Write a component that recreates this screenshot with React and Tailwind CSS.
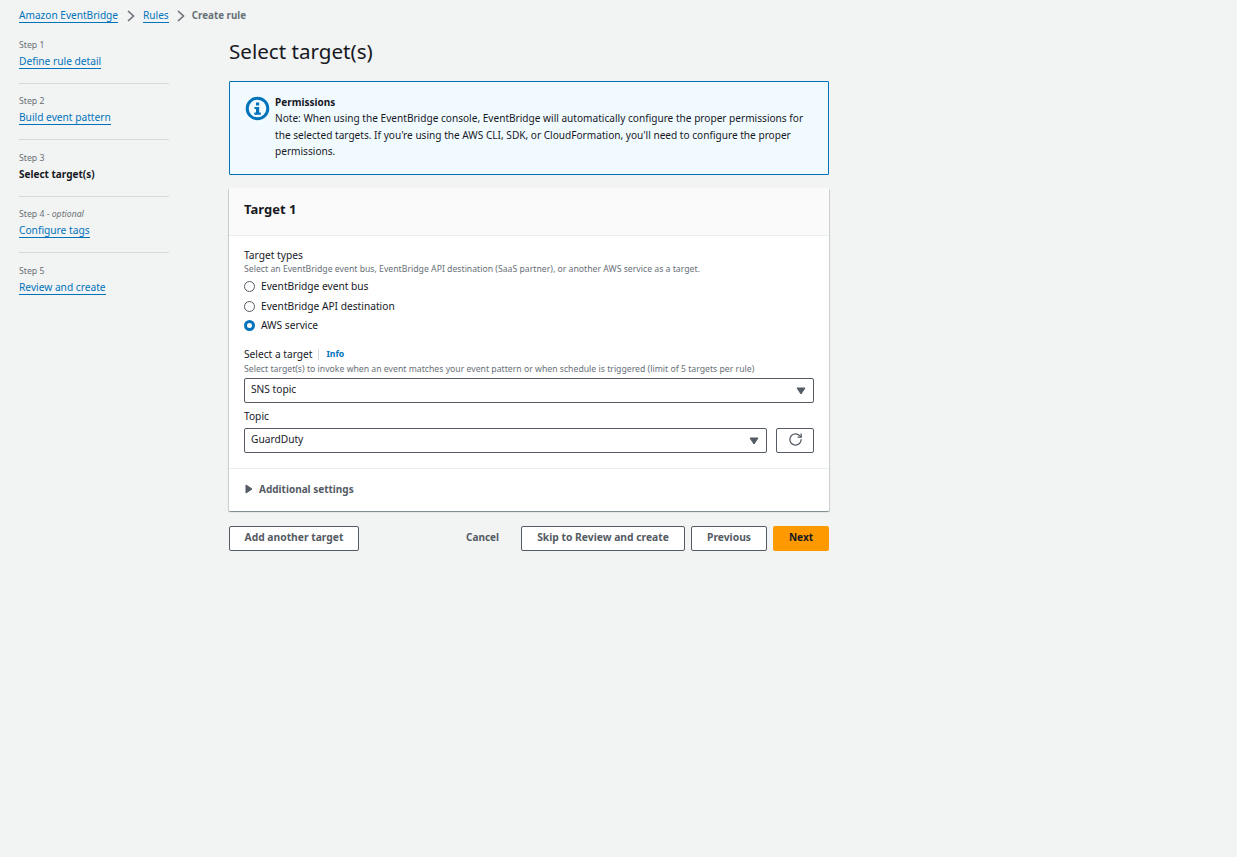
import React from 'react';
import { RotateCw } from 'lucide-react';

const steps = [
  { label: 'Step 1', name: 'Define rule detail' },
  { label: 'Step 2', name: 'Build event pattern' },
  { label: 'Step 3', name: 'Select target(s)', active: true },
  { label: 'Step 4', optional: true, name: 'Configure tags' },
  { label: 'Step 5', name: 'Review and create' },
];

const Caret = ({ className }) => (
  <svg width="10" height="8" viewBox="0 0 10 8" className={className}>
    <path d="M1 1h8L5 7z" fill="#545b64" stroke="#545b64" strokeLinejoin="round" />
  </svg>
);

const Chevron = ({ className }) => (
  <svg width="10" height="12" viewBox="0 0 10 12" className={className}>
    <path d="M2 1l5.5 5L2 11" fill="none" stroke="#687078" strokeWidth="1.6" />
  </svg>
);

const Radio = ({ checked, label }) => (
  <div className="flex items-center h-[19.5px]">
    {checked ? (
      <span className="w-[11px] h-[11px] rounded-full border-[3px] border-[#0073bb] bg-white" />
    ) : (
      <span className="w-[11px] h-[11px] rounded-full border border-[#545b64] bg-white" />
    )}
    <span className="ml-[6px] text-[10.2px] text-[#16191f]">{label}</span>
  </div>
);

const Select = ({ value, className }) => (
  <div className={`flex items-center justify-between h-[25px] pl-[6px] pr-[7px] bg-white border border-[#545b64] rounded-[2px] text-[10.2px] text-[#16191f] ${className}`}>
    <span className="pb-[2px]">{value}</span>
    <Caret />
  </div>
);

const Button = ({ children, className = '' }) => (
  <button className={`h-[25px] pb-[2px] bg-white border border-[#545b64] rounded-[2px] text-[10.3px] font-bold text-[#545b64] ${className}`}>
    {children}
  </button>
);

export default function App() {
  return (
    <div className="min-h-[857px] bg-[#f2f3f3] font-['Noto_Sans',sans-serif] pl-[19px] pt-[8px]">
      {/* Breadcrumbs */}
      <div className="flex items-center h-[15px] text-[10.1px] leading-[15px]">
        <a className="text-[#0073bb] border-b border-[#0073bb] leading-[14px]">Amazon EventBridge</a>
        <Chevron className="mx-[7.5px]" />
        <a className="text-[#0073bb] border-b border-[#0073bb] leading-[14px]">Rules</a>
        <Chevron className="ml-[7.5px] mr-[5.5px]" />
        <span className="font-bold text-[9.8px] text-[#687078]">Create rule</span>
      </div>

      <div className="flex">
        {/* Steps */}
        <nav className="w-[150px] mt-[15.7px] shrink-0">
          {steps.map((s, i) => (
            <div key={s.label} className={i < steps.length - 1 ? 'h-[45px] border-b border-[#d5dbdb] mb-[11.5px]' : ''}>
              <div className="text-[8.7px] leading-[13px] text-[#687078]">
                {s.label}
                {s.optional && <span> - <i>optional</i></span>}
              </div>
              <div className="mt-[2px] text-[10.2px] leading-[15px]">
                {s.active ? (
                  <span className="font-bold text-[10px] text-[#16191f]">{s.name}</span>
                ) : (
                  <a className="text-[#0073bb] border-b border-[#0073bb]">{s.name}</a>
                )}
              </div>
            </div>
          ))}
        </nav>

        {/* Main */}
        <main className="ml-[60px] w-[600px]">
          <h1 className="mt-[12px] text-[20.6px] leading-[32px] text-[#16191f]">Select target(s)</h1>

          <div className="mt-[14px] h-[94px] flex bg-[#f1faff] border border-[#0073bb] rounded-[1px] pl-[15px] pt-[12px]">
            <svg width="25" height="25" viewBox="0 0 25 25" className="shrink-0 mt-[2px]">
              <circle cx="12.5" cy="12.5" r="10.3" fill="none" stroke="#0073bb" strokeWidth="3" />
              <rect x="11" y="6.5" width="3.2" height="3" fill="#0073bb" />
              <path d="M9.5 11h4.7v5.5h1.6V18.8H9.3v-2.3H11V13H9.5z" fill="#0073bb" />
            </svg>
            <div className="ml-[5px] w-[540px] text-[10.1px] leading-[16.4px] text-[#16191f]">
              <div className="font-bold text-[10px]">Permissions</div>
              <div>
                Note: When using the EventBridge console, EventBridge will automatically configure the proper permissions for the selected targets. If you're using the AWS CLI, SDK, or CloudFormation, you'll need to configure the proper permissions.
              </div>
            </div>
          </div>

          {/* Target card */}
          <section className="mt-[13px] bg-white shadow-[0_1px_1px_0_rgba(0,28,36,0.3),1px_1px_1px_0_rgba(0,28,36,0.15),-1px_1px_1px_0_rgba(0,28,36,0.15)] rounded-[1px]">
            <div className="h-[48px] flex items-center px-[15px] pb-[4px] bg-[#fafafa] border-b border-[#eaeded]">
              <h2 className="text-[13px] font-bold text-[#16191f]">Target 1</h2>
            </div>

            <div className="px-[15px] pt-[12px] pb-[15px] border-b border-[#eaeded]">
              <div className="text-[10.2px] leading-[15px] text-[#16191f]">Target types</div>
              <div className="text-[8.7px] leading-[13px] text-[#687078]">
                Select an EventBridge event bus, EventBridge API destination (SaaS partner), or another AWS service as a target.
              </div>
              <div className="mt-[1px]">
                <Radio label="EventBridge event bus" />
                <Radio label="EventBridge API destination" />
                <Radio checked label="AWS service" />
              </div>

              <div className="mt-[11px] flex items-center text-[10.2px] leading-[15px] text-[#16191f]">
                Select a target
                <span className="ml-[6px] mr-[7px] w-px h-[11px] bg-[#d5dbdb]" />
                <a className="text-[8.7px] font-bold text-[#0073bb]">Info</a>
              </div>
              <div className="mt-[1.5px] text-[8.7px] leading-[13px] text-[#687078]">
                Select target(s) to invoke when an event matches your event pattern or when schedule is triggered (limit of 5 targets per rule)
              </div>
              <Select value="SNS topic" className="mt-[2px]" />

              <div className="mt-[6px] text-[10.2px] leading-[15px] text-[#16191f]">Topic</div>
              <div className="mt-[4px] flex gap-[9px]">
                <Select value="GuardDuty" className="flex-1" />
                <Button className="w-[38px] pb-0 flex items-center justify-center">
                  <RotateCw size={15} strokeWidth={2} className="text-[#545b64]" />
                </Button>
              </div>
            </div>

            <div className="h-[42px] flex items-center px-[15px] pb-[2px]">
              <svg width="8" height="10" viewBox="0 0 8 10" className="ml-[1px]">
                <path d="M1 1v8l6-4z" fill="#545b64" stroke="#545b64" strokeLinejoin="round" />
              </svg>
              <span className="ml-[6px] text-[10px] font-bold text-[#545b64]">Additional settings</span>
            </div>
          </section>

          {/* Actions */}
          <div className="mt-[15px] flex items-center">
            <Button className="w-[130px]">Add another target</Button>
            <span className="ml-auto mr-[22px] pb-[2px] text-[10px] font-bold text-[#545b64]">Cancel</span>
            <Button className="w-[164px]">Skip to Review and create</Button>
            <Button className="ml-[6px] w-[76px]">Previous</Button>
            <button className="ml-[6px] w-[56px] h-[25px] pb-[2px] bg-[#ff9900] rounded-[2px] text-[10px] font-bold text-[#16191f]">Next</button>
          </div>
        </main>
      </div>
    </div>
  );
}
